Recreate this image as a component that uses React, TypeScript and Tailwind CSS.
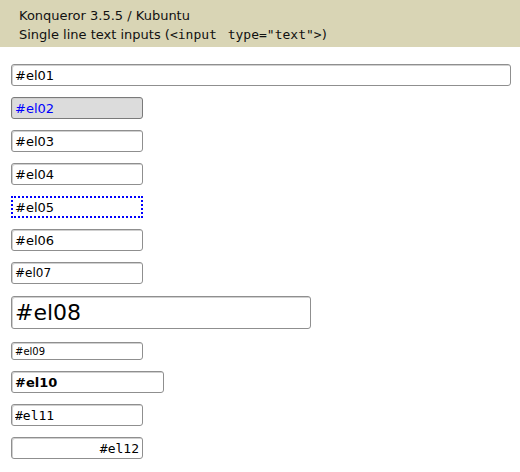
import React from 'react';

const base =
  'block box-border border border-[#8f8f8f] rounded-[3px] bg-white text-black px-[3px] outline-none font-["DejaVu_Sans",sans-serif] shadow-[inset_1px_1px_0_#d0d0d0]';

export default function App() {
  return (
    <div className="w-[520px] h-[472px] bg-white font-['DejaVu_Sans',sans-serif]">
      <div className="h-[47px] bg-[#d9d5b5] pl-[19px] pt-[6px] text-[13px] leading-[19px] text-[#111]">
        <div>Konqueror 3.5.5 / Kubuntu</div>
        <div>
          Single line text inputs (
          <span className="font-['DejaVu_Sans_Mono',monospace] text-[13px]">
            &lt;input <span className="ml-[3px]">type="text"&gt;</span>
          </span>
          )
        </div>
      </div>

      <div className="pl-[11px] flex flex-col">
        <input readOnly defaultValue="#el01" className={`${base} mt-[17px] w-[500px] h-[22px] text-[13px]`} />
        <input
          readOnly
          defaultValue="#el02"
          className={`${base} mt-[11px] w-[132px] h-[22px] text-[13px] !bg-[#dcdcdc] !text-[#0000ff] !border-[#7a7a7a]`}
        />
        <input readOnly defaultValue="#el03" className={`${base} mt-[11px] w-[132px] h-[22px] text-[13px]`} />
        <input readOnly defaultValue="#el04" className={`${base} mt-[11px] w-[132px] h-[22px] text-[13px]`} />
        <input
          readOnly
          defaultValue="#el05"
          className="block box-border mt-[11px] w-[132px] h-[22px] px-[2px] text-[13px] bg-white text-black outline-none border-2 border-dotted border-[#0000ff] font-['DejaVu_Sans',sans-serif]"
        />
        <input readOnly defaultValue="#el06" className={`${base} mt-[11px] w-[132px] h-[22px] text-[13px]`} />
        <input readOnly defaultValue="#el07" className={`${base} mt-[11px] w-[132px] h-[22px] text-[12px]`} />
        <input readOnly defaultValue="#el08" className={`${base} mt-[12px] w-[300px] h-[33px] text-[22px]`} />
        <input readOnly defaultValue="#el09" className={`${base} mt-[13px] w-[132px] h-[18px] text-[10px]`} />
        <input readOnly defaultValue="#el10" className={`${base} mt-[11px] w-[153px] h-[22px] text-[13px] font-bold`} />
        <input
          readOnly
          defaultValue="#el11"
          className={`${base} mt-[11px] w-[132px] h-[22px] text-[13px] !font-['DejaVu_Sans_Mono',monospace]`}
        />
        <input
          readOnly
          defaultValue="#el12"
          className={`${base} mt-[11px] w-[132px] h-[22px] text-[13px] text-right !font-['DejaVu_Sans_Mono',monospace]`}
        />
      </div>
    </div>
  );
}
